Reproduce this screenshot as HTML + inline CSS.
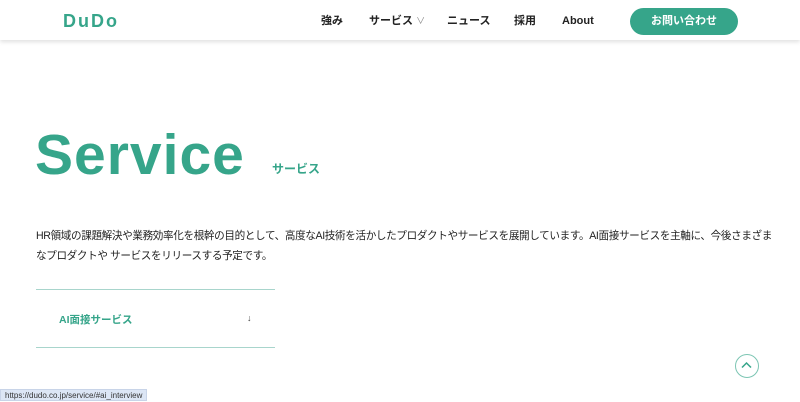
<!DOCTYPE html>
<html><head><meta charset="utf-8"><style>
*{margin:0;padding:0;box-sizing:border-box}
body{width:800px;height:401px;background:#fff;font-family:"Liberation Sans","Noto Sans CJK JP",sans-serif;position:relative;overflow:hidden;color:#222}
.hd{position:absolute;left:0;top:0;width:800px;height:40px;background:#fff;box-shadow:0 2px 4px rgba(0,0,0,.12)}
.logo{position:absolute;left:63px;top:11px;font-size:18px;font-weight:bold;color:#36a58a;letter-spacing:2px}
.nav{position:absolute;top:14px;font-size:11px;font-weight:bold;color:#222;line-height:14px}
.btn{position:absolute;left:630px;top:8px;width:108px;height:27px;border-radius:14px;background:#36a58a;color:#fff;font-size:11px;font-weight:bold;text-align:center;line-height:27px}
.title{position:absolute;left:35px;top:122px;font-size:57px;font-weight:bold;color:#36a58a;letter-spacing:1px}
.sub{position:absolute;left:272px;top:160px;font-size:12px;font-weight:bold;color:#36a58a}
.p{position:absolute;left:36px;top:226px;width:780px;font-size:10.6px;line-height:20px;color:#222;letter-spacing:-0.37px;white-space:nowrap}
.line{position:absolute;left:36px;width:239px;height:1px;background:#a8d5cc}
.ai{position:absolute;left:59px;top:312px;font-size:10.5px;font-weight:bold;color:#36a58a}
.up{position:absolute;left:735px;top:354px;width:24px;height:24px;border:1.5px solid #7cc5b3;border-radius:50%}
.st{position:absolute;left:0;top:389px;height:12px;padding:0 4px;background:#dce6f5;font-size:8px;line-height:12px;color:#333;border:1px solid #c8d4e8}
</style></head><body>
<div class="hd">
<div class="logo">DuDo</div>
<div class="nav" style="left:321px">強み</div>
<div class="nav" style="left:369px">サービス <span style="font-weight:normal;color:#888;font-size:9px">∨</span></div>
<div class="nav" style="left:447px">ニュース</div>
<div class="nav" style="left:514px">採用</div>
<div class="nav" style="left:562px">About</div>
<div class="btn">お問い合わせ</div>
</div>
<div class="title">Service</div>
<div class="sub">サービス</div>
<div class="p">HR領域の課題解決や業務効率化を根幹の目的として、高度なAI技術を活かしたプロダクトやサービスを展開しています。AI面接サービスを主軸に、今後さまざま<br>なプロダクトや サービスをリリースする予定です。</div>
<div class="line" style="top:289px"></div>
<div class="ai">AI面接サービス</div>
<div style="position:absolute;left:247px;top:313px;font-size:9px;color:#444">↓</div>
<div class="line" style="top:347px"></div>
<div class="up"><svg width="21" height="21" viewBox="0 0 21 21"><path d="M6 12.5l4.5-4.5 4.5 4.5" fill="none" stroke="#36a58a" stroke-width="1.5"/></svg></div>
<div class="st">https://dudo.co.jp/service/#ai_interview</div>
</body></html>
